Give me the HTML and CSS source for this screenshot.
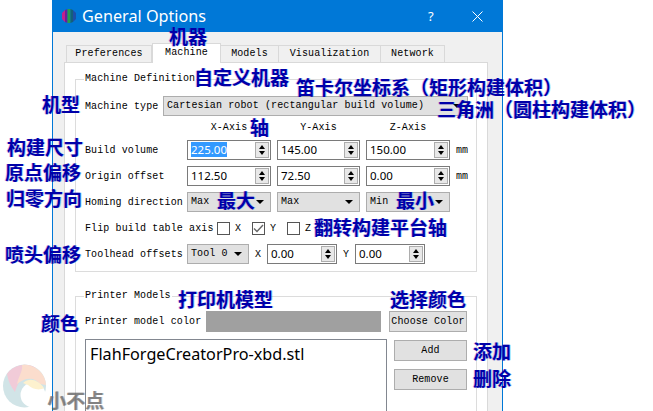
FILE: index.html
```html
<!DOCTYPE html>
<html lang="en">

<head>
  <meta charset="UTF-8">
  <title>General Options</title>
  <link rel="stylesheet" href="styles.css">
</head>

<body>
  <div class="window">
    <header class="titlebar">
      <svg class="app-icon" width="14" height="14" viewBox="0 0 14 14">
        <path d="M0 4 L3 1 L3 13 L0 10 Z" fill="#c4208c" />
        <path d="M3 1 L5.5 0 L5.5 14 L3 13 Z" fill="#6a1f9a" />
        <path d="M5.5 0 L8.5 0 L8.5 14 L5.5 14 Z" fill="#27a04a" />
        <path d="M8.5 0 L11 1 L11 13 L8.5 14 Z" fill="#14607a" />
        <path d="M11 1 L14 4 L14 10 L11 13 Z" fill="#1c4fa8" />
      </svg>
      <span class="title">General Options</span>
      <span class="help">?</span>
      <svg class="close" width="11" height="11" viewBox="0 0 11 11">
        <path d="M0.5 0.5 L10.5 10.5 M10.5 0.5 L0.5 10.5" stroke="#fff" stroke-width="1" />
      </svg>
    </header>

    <nav class="tabs">
      <div class="tab tab-prefs">Preferences</div>
      <div class="tab tab-active">Machine</div>
      <div class="tab tab-models">Models</div>
      <div class="tab tab-vis">Visualization</div>
      <div class="tab tab-net">Network</div>
    </nav>

    <section class="pane">
      <fieldset class="group group-machine">
        <legend>Machine Definition</legend>
        <div class="form">
          <div class="row-full">
            <span class="label-type">Machine type</span>
            <div class="combo combo-wide">Cartesian robot (rectangular build volume)</div>
          </div>

          <span></span>
          <span class="axis">X-Axis</span>
          <span class="axis">Y-Axis</span>
          <span class="axis">Z-Axis</span>
          <span></span>

          <span class="label">Build volume</span>
          <div class="spin"><span class="value"><span class="selected">225.00</span></span><span class="spin-btns"><i class="up"></i><i class="down"></i></span></div>
          <div class="spin"><span class="value">145.00</span><span class="spin-btns"><i class="up"></i><i class="down"></i></span></div>
          <div class="spin"><span class="value">150.00</span><span class="spin-btns"><i class="up"></i><i class="down"></i></span></div>
          <span class="label">mm</span>

          <span class="label">Origin offset</span>
          <div class="spin"><span class="value">112.50</span><span class="spin-btns"><i class="up"></i><i class="down"></i></span></div>
          <div class="spin"><span class="value">72.50</span><span class="spin-btns"><i class="up"></i><i class="down"></i></span></div>
          <div class="spin"><span class="value">0.00</span><span class="spin-btns"><i class="up"></i><i class="down"></i></span></div>
          <span class="label">mm</span>

          <span class="label">Homing direction</span>
          <div class="combo">Max</div>
          <div class="combo">Max</div>
          <div class="combo">Min</div>
          <span></span>

          <div class="row-full">
            <span class="label-flip">Flip build table axis</span>
            <span class="check"></span><span class="check-text">X</span>
            <span class="check">
              <svg width="11" height="9" viewBox="0 0 11 9"><path d="M1 4.5 L4 7.5 L10 1" fill="none" stroke="#666" stroke-width="1.4" /></svg>
            </span><span class="check-text">Y</span>
            <span class="check"></span><span class="check-text">Z</span>
          </div>

          <div class="row-full">
            <span class="label-head">Toolhead offsets</span>
            <div class="combo combo-tool">Tool 0</div>
            <span class="axis-letter">X</span>
            <div class="spin spin-small"><span class="value">0.00</span><span class="spin-btns"><i class="up"></i><i class="down"></i></span></div>
            <span class="axis-letter">Y</span>
            <div class="spin spin-small"><span class="value">0.00</span><span class="spin-btns"><i class="up"></i><i class="down"></i></span></div>
          </div>
        </div>
      </fieldset>

      <fieldset class="group group-models">
        <legend>Printer Models</legend>
        <div class="color-row">
          <span class="label-color">Printer model color</span>
          <div class="swatch"></div>
          <div class="btn btn-choose">Choose Color</div>
        </div>
        <div class="list-row">
          <div class="model-list">FlahForgeCreatorPro-xbd.stl</div>
          <div class="list-btns">
            <div class="btn">Add</div>
            <div class="btn">Remove</div>
          </div>
        </div>
      </fieldset>
    </section>
  </div>

  <!-- annotations on top of the screenshot -->
  <span class="note n-machine">机器</span>
  <span class="note n-custom">自定义机器</span>
  <span class="note n-cartesian">笛卡尔坐标系（矩形构建体积）</span>
  <span class="note n-delta">三角洲（圆柱构建体积）</span>
  <span class="note n-type">机型</span>
  <span class="note n-axis">轴</span>
  <span class="note n-size">构建尺寸</span>
  <span class="note n-origin">原点偏移</span>
  <span class="note n-homing">归零方向</span>
  <span class="note n-head">喷头偏移</span>
  <span class="note n-max">最大</span>
  <span class="note n-min">最小</span>
  <span class="note n-flip">翻转构建平台轴</span>
  <span class="note n-models">打印机模型</span>
  <span class="note n-color">颜色</span>
  <span class="note n-choose">选择颜色</span>
  <span class="note n-add">添加</span>
  <span class="note n-remove">删除</span>

  <svg class="wm-logo" width="44" height="48" viewBox="0 0 44 48">
    <circle cx="22.5" cy="23" r="21.5" fill="#cfe3e6" />
    <path d="M5 11 A21.5 21.5 0 0 1 34 5 C26 9 18 13 13 29 C9 24 6 18 5 11 Z" fill="#f1c9d6" />
    <path d="M20 2 A21.5 21.5 0 0 1 44 22 L38 21 C32 14 24 14 15 21 C17 12 21 8 20 2 Z" fill="#fbdccb" />
    <circle cx="31" cy="32" r="12.5" fill="#fff" />
    <path d="M21 20 C28 14 36 17 42 25 C37 28 30 26 26 22 Z" fill="#fdf1cc" />
  </svg>
  <span class="wm-text">小不点</span>
</body>

</html>
```

FILE: styles.css
```css
* {
  margin: 0;
  padding: 0;
  box-sizing: border-box;
}

html,
body {
  width: 653px;
  height: 411px;
  overflow: hidden;
  background: white;
}

body {
  position: relative;
  font-family: 'Liberation Mono', monospace;
  font-size: 10px;
  letter-spacing: 0.12px;
  color: #000;
}

.window {
  width: 451px;
  height: 411px;
  margin-left: 52px;
  background: #f0f0f0;
  border-left: 1px solid #0078d7;
  border-right: 1px solid #0078d7;
  overflow: hidden;
}

.titlebar {
  height: 32px;
  background: #0078d7;
  color: white;
  display: flex;
  align-items: center;
  padding-left: 9px;
}

.app-icon {
  margin-right: 6px;
}

.title {
  font-family: 'Noto Sans', sans-serif;
  font-size: 16.2px;
  letter-spacing: 0;
  width: 346px;
}

.help {
  font-family: 'Noto Sans', sans-serif;
  font-size: 13px;
  letter-spacing: 0;
  width: 44px;
}

.tabs {
  display: flex;
  align-items: flex-end;
  height: 19px;
  margin-top: 11px;
  padding-left: 13px;
}

.tab {
  height: 17px;
  line-height: 16px;
  text-align: center;
  background: #f0f0f0;
  border: 1px solid #d9d9d9;
  border-bottom: none;
  border-left: none;
}

.tab-prefs {
  width: 86px;
  border-left: 1px solid #d9d9d9;
}

.tab-active {
  width: 69px;
  height: 20px;
  line-height: 18px;
  background: white;
  border-left: 1px solid #d9d9d9;
  margin-bottom: -1px;
  position: relative;
}

.tab-models {
  width: 58px;
}

.tab-vis {
  width: 102px;
}

.tab-net {
  width: 64px;
}

.pane {
  width: 424px;
  height: 360px;
  margin-left: 11px;
  background: white;
  border: 1px solid #d9d9d9;
  padding: 10px 0 0 10px;
}

.group {
  width: 402px;
  border: 1px solid #dcdcdc;
  padding: 0 0 0 9px;
}

.group legend {
  margin-left: -1px;
  padding: 0 1px;
  line-height: 12px;
}

.group-machine {
  height: 199px;
  margin-bottom: 18px;
}

.group-models {
  height: 130px;
}

.form {
  display: grid;
  grid-template-columns: 96px 84px 83px 84px 1fr;
  grid-template-rows: 20px 12px 20px 20px 20px 20px 20px;
  gap: 6px;
  margin-top: 11px;
}

.row-full {
  grid-column: 1 / -1;
  display: flex;
  align-items: center;
}

.label {
  align-self: center;
  white-space: nowrap;
}

.axis {
  text-align: center;
  line-height: 12px;
}

.label-type {
  width: 78px;
}

.label-flip {
  width: 132px;
}

.label-head {
  width: 102px;
}

.combo {
  position: relative;
  height: 20px;
  line-height: 18px;
  padding-left: 3px;
  background: #e1e1e1;
  border: 1px solid #adadad;
}

.combo::after {
  content: '';
  position: absolute;
  right: 6px;
  top: 7px;
  border-left: 4px solid transparent;
  border-right: 4px solid transparent;
  border-top: 4px solid #000;
}

.combo-wide {
  width: 305px;
}

.combo-tool {
  width: 62px;
}

.spin {
  display: flex;
  align-items: center;
  height: 20px;
  background: white;
  border: 1px solid #7a7a7a;
}

.spin-small {
  width: 70px;
}

.value {
  flex: 1;
  padding-left: 3px;
  font-family: 'Noto Sans', sans-serif;
  font-size: 11.5px;
  letter-spacing: 0;
  line-height: 16px;
}

.selected {
  background: #3399ff;
  color: white;
}

.spin-btns {
  width: 14px;
  height: 16px;
  margin-right: 1px;
  background: #e8e8e8;
  border: 1px solid #adadad;
  display: flex;
  flex-direction: column;
  align-items: center;
  justify-content: center;
  gap: 2px;
}

.up,
.down {
  display: block;
  border-left: 3px solid transparent;
  border-right: 3px solid transparent;
}

.up {
  border-bottom: 4px solid #000;
}

.down {
  border-top: 4px solid #000;
}

.check {
  width: 13px;
  height: 13px;
  background: white;
  border: 1px solid #555;
  display: flex;
  align-items: center;
  justify-content: center;
}

.check-text {
  width: 22px;
  padding-left: 5px;
}

.axis-letter {
  width: 18px;
  padding-left: 6px;
}

.color-row {
  display: flex;
  align-items: center;
  height: 21px;
  margin-top: 9px;
}

.label-color {
  width: 121px;
}

.swatch {
  width: 175px;
  height: 21px;
  background: #a0a0a0;
  margin-right: 8px;
}

.btn {
  width: 73px;
  height: 21px;
  line-height: 19px;
  text-align: center;
  background: #e1e1e1;
  border: 1px solid #adadad;
}

.btn-choose {
  width: 78px;
}

.list-row {
  display: flex;
  margin-top: 7px;
}

.model-list {
  width: 302px;
  height: 90px;
  margin-right: 7px;
  padding: 3px 4px;
  border: 1px solid #828790;
  font-family: 'Noto Sans', sans-serif;
  font-size: 16.2px;
  letter-spacing: 0;
  line-height: 22px;
}

.list-btns {
  display: flex;
  flex-direction: column;
  gap: 8px;
  margin-top: 1px;
}

.note {
  position: absolute;
  font-family: 'Noto Sans CJK SC', sans-serif;
  font-size: 19px;
  font-weight: 700;
  letter-spacing: 0;
  line-height: 22px;
  color: #0000a8;
  text-shadow: 1px 0 0 rgba(0, 150, 255, 0.35), -1px 0 0 rgba(200, 0, 160, 0.25);
  text-spacing-trim: space-all;
  white-space: nowrap;
}

.n-machine { left: 169px; top: 25px; }
.n-custom { left: 194px; top: 66px; }
.n-cartesian { left: 296px; top: 76px; }
.n-delta { left: 437px; top: 98px; }
.n-type { left: 42px; top: 93px; }
.n-axis { left: 250px; top: 116px; }
.n-size { left: 7px; top: 136px; }
.n-origin { left: 5px; top: 161px; }
.n-homing { left: 6px; top: 187px; }
.n-head { left: 5px; top: 243px; }
.n-max { left: 217px; top: 189px; }
.n-min { left: 396px; top: 189px; }
.n-flip { left: 314px; top: 216px; }
.n-models { left: 178px; top: 288px; }
.n-color { left: 41px; top: 312px; }
.n-choose { left: 390px; top: 288px; }
.n-add { left: 473px; top: 340px; }
.n-remove { left: 473px; top: 367px; }

.wm-logo {
  position: absolute;
  left: 2px;
  top: 363px;
  opacity: 0.95;
}

.wm-text {
  position: absolute;
  left: 47px;
  top: 389px;
  font-family: 'Noto Sans CJK SC', sans-serif;
  font-size: 19px;
  font-weight: 700;
  letter-spacing: 0;
  line-height: 22px;
  color: rgba(100, 100, 100, 0.7);
  text-shadow: 1px 0 0 rgba(100, 100, 100, 0.4);
}
```
